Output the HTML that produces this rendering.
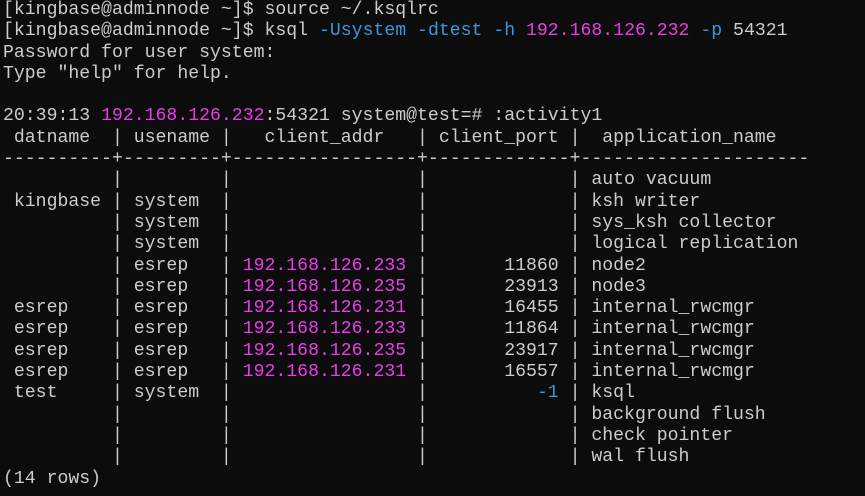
<!DOCTYPE html>
<html><head><meta charset="utf-8"><style>
html,body{margin:0;padding:0;background:#0c0c0c;width:865px;height:496px;overflow:hidden}
pre{margin:0;position:absolute;left:3px;top:0px;font-family:"Liberation Mono",monospace;font-size:18.17px;line-height:21.3px;color:#cccccc}
.m{color:#e83de8}.c{color:#3a96dd}
</style></head><body><pre>[kingbase@adminnode ~]$ source ~/.ksqlrc
[kingbase@adminnode ~]$ ksql <span class="c">-Usystem -dtest -h</span> <span class="m">192.168.126.232</span> <span class="c">-p</span> 54321
Password for user system:
Type "help" for help.

20:39:13 <span class="m">192.168.126.232</span>:54321 system@test=# :activity1
 datname  | usename |   client_addr   | client_port |  application_name
----------+---------+-----------------+-------------+---------------------
          |         |                 |             | auto vacuum
 kingbase | system  |                 |             | ksh writer
          | system  |                 |             | sys_ksh collector
          | system  |                 |             | logical replication
          | esrep   | <span class="m">192.168.126.233</span> |       11860 | node2
          | esrep   | <span class="m">192.168.126.235</span> |       23913 | node3
 esrep    | esrep   | <span class="m">192.168.126.231</span> |       16455 | internal_rwcmgr
 esrep    | esrep   | <span class="m">192.168.126.233</span> |       11864 | internal_rwcmgr
 esrep    | esrep   | <span class="m">192.168.126.235</span> |       23917 | internal_rwcmgr
 esrep    | esrep   | <span class="m">192.168.126.231</span> |       16557 | internal_rwcmgr
 test     | system  |                 |          <span class="c">-1</span> | ksql
          |         |                 |             | background flush
          |         |                 |             | check pointer
          |         |                 |             | wal flush
(14 rows)
</pre></body></html>
